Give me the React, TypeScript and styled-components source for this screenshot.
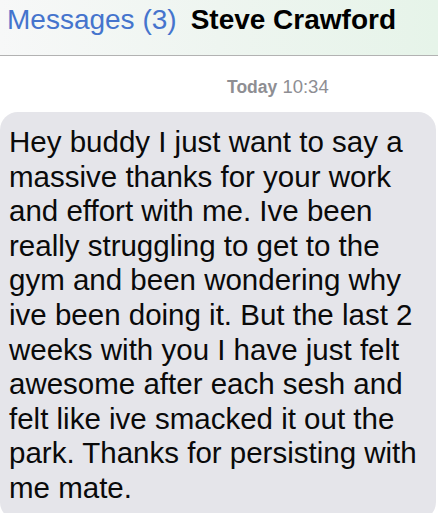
import React from "react";
import styled, { createGlobalStyle } from "styled-components";

const Global = createGlobalStyle`
  html, body { margin: 0; padding: 0; background: #ffffff; }
  body { font-family: "Liberation Sans", Arial, sans-serif; overflow: hidden; }
`;

const Screen = styled.div`
  width: 438px;
  height: 513px;
  overflow: hidden;
  background: #ffffff;
  display: flex;
  flex-direction: column;
`;

const NavBar = styled.header`
  height: 56px;
  flex: none;
  box-sizing: border-box;
  border-bottom: 1px solid #b2b2b2;
  background: linear-gradient(90deg, #f7f8f8 0%, #eef5f0 50%, #e6f4e9 100%);
  display: flex;
  align-items: flex-start;
  padding: 4px 0 0 7px;
  gap: 14px;
  white-space: nowrap;
`;

const BackLink = styled.span`
  font-size: 28px;
  color: #4574cd;
  line-height: 32px;
`;

const Title = styled.span`
  font-size: 28px;
  font-weight: bold;
  color: #000000;
  line-height: 32px;
`;

const Stamp = styled.div`
  margin-top: 21px;
  padding-left: 227px;
  font-size: 18.5px;
  line-height: 20px;
  color: #8e8e93;
  white-space: nowrap;
`;

const Strong = styled.b`
  font-weight: bold;
  font-size: 17.5px;
`;

const Bubble = styled.div`
  margin-top: 15px;
  margin-right: 2px;
  background: #e5e5ea;
  border-radius: 18px;
  padding: 13px 0 14px 9px;
  flex: 1;
`;

const Line = styled.div`
  font-size: 29.5px;
  line-height: 34.6px;
  color: #0a0a0a;
  white-space: nowrap;
`;

const lines = [
  "Hey buddy I just want to say a",
  "massive thanks for your work",
  "and effort with me. Ive been",
  "really struggling to get to the",
  "gym and been wondering why",
  "ive been doing it. But the last 2",
  "weeks with you I have just felt",
  "awesome after each sesh and",
  "felt like ive smacked it out the",
  "park. Thanks for persisting with",
  "me mate.",
];

export default function App() {
  return (
    <>
      <Global />
      <Screen>
        <NavBar>
          <BackLink>Messages (3)</BackLink>
          <Title>Steve Crawford</Title>
        </NavBar>
        <Stamp>
          <Strong>Today</Strong> 10:34
        </Stamp>
        <Bubble>
          {lines.map((l, i) => (
            <Line key={i}>{l}</Line>
          ))}
        </Bubble>
      </Screen>
    </>
  );
}
